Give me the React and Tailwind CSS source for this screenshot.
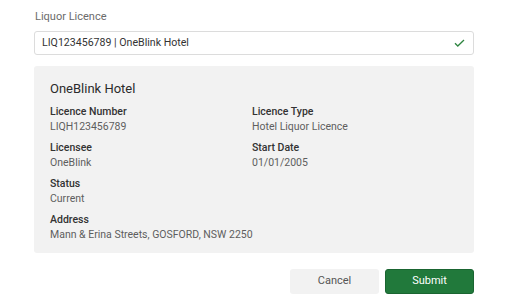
export default function App() {
  const fields = [
    [
      { label: "Licence Number", value: "LIQH123456789" },
      { label: "Licence Type", value: "Hotel Liquor Licence" },
    ],
    [
      { label: "Licensee", value: "OneBlink" },
      { label: "Start Date", value: "01/01/2005" },
    ],
    [{ label: "Status", value: "Current" }],
    [{ label: "Address", value: "Mann & Erina Streets, GOSFORD, NSW 2250" }],
  ];

  return (
    <div className="w-[512px] h-[307px] bg-white font-['Roboto',sans-serif] pl-[34px] pr-[38px] pt-[10px]">
      <label className="block text-[11px] text-[#6b6b6b] leading-[14px] ml-[1px]">
        Liquor Licence
      </label>
      <div className="mt-[7px] h-[24px] flex items-center justify-between border border-[#dcdcdc] rounded-[3px] pl-[7px] pr-[8px]">
        <span className="text-[10.6px] text-[#333]">LIQ123456789 | OneBlink Hotel</span>
        <svg width="11" height="8" viewBox="0 0 11 8" fill="none">
          <path d="M1 4.2 L3.8 7 L10 1" stroke="#2e8540" strokeWidth="1.3" />
        </svg>
      </div>

      <div className="mt-[11px] h-[187px] bg-[#f2f2f2] rounded-[3px] pl-[16px] pt-[14px]">
        <h3 className="text-[13px] text-[#2b2b2b] leading-[18px]">OneBlink Hotel</h3>
        <div className="mt-[6px] flex flex-col gap-[6px]">
          {fields.map((row, i) => (
            <div key={i} className="grid grid-cols-[202px_1fr]">
              {row.map((f) => (
                <div key={f.label} className={row.length === 1 ? "col-span-2" : ""}>
                  <div className="text-[10.5px] font-medium text-[#333] leading-[15px]">{f.label}</div>
                  <div className="text-[10.5px] text-[#5e5e5e] leading-[15px]">{f.value}</div>
                </div>
              ))}
            </div>
          ))}
        </div>
      </div>

      <div className="mt-[16px] flex justify-end gap-[6px]">
        <button className="w-[89px] h-[25px] bg-[#f2f2f2] rounded-[3px] text-[11px] text-[#555]">
          Cancel
        </button>
        <button className="w-[89px] h-[25px] bg-[#21793b] border border-[#1a6531] rounded-[3px] text-[11px] text-white">
          Submit
        </button>
      </div>
    </div>
  );
}
